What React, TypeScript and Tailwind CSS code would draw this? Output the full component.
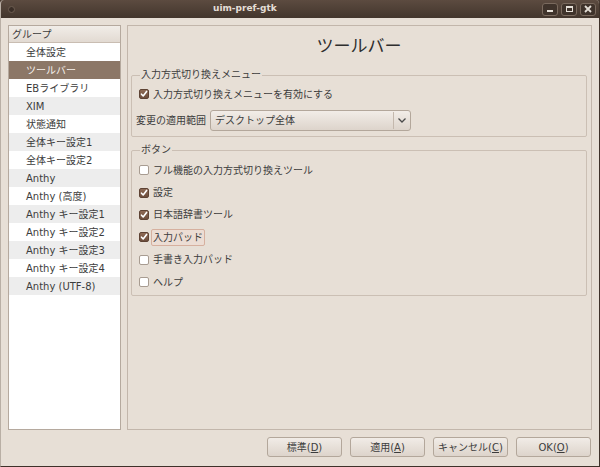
import React from "react";

const FONT = { fontFamily: '"DejaVu Sans", "Noto Sans CJK JP", sans-serif' };

const groups = [
  "全体設定",
  "ツールバー",
  "EBライブラリ",
  "XIM",
  "状態通知",
  "全体キー設定1",
  "全体キー設定2",
  "Anthy",
  "Anthy (高度)",
  "Anthy キー設定1",
  "Anthy キー設定2",
  "Anthy キー設定3",
  "Anthy キー設定4",
  "Anthy (UTF-8)",
];

function Check({ checked }: { checked: boolean }) {
  if (checked) {
    return (
      <span className="w-[10px] h-[10px] rounded-[2px] border border-[#5e4334] bg-gradient-to-b from-[#8e6a55] to-[#6d4e3d] flex items-center justify-center shrink-0">
        <svg width="8" height="8" viewBox="0 0 8 8">
          <path d="M1.5 4.2 L3.2 6 L6.6 1.4" stroke="#ffffff" strokeWidth="1.6" fill="none" strokeLinecap="round" strokeLinejoin="round" />
        </svg>
      </span>
    );
  }
  return <span className="w-[10px] h-[10px] rounded-[2px] border border-[#a89c91] bg-white shrink-0" />;
}

function CheckRow({ label, checked, focused, h = "h-[22.4px]" }: { label: string; checked: boolean; focused?: boolean; h?: string }) {
  return (
    <div className={`flex items-center ${h} pl-[7px] gap-[2px]`}>
      <Check checked={checked} />
      <span
        className={`px-[1px] leading-[15px] rounded-[2px] border ${
          focused ? "border-[#d6b09f] bg-[#ecddd4]" : "border-transparent"
        }`}
      >
        {label}
      </span>
    </div>
  );
}

function Btn({ text, mn }: { text: string; mn: string }) {
  return (
    <div className="w-[75px] h-[20px] rounded-[3px] border border-[#b3a79b] bg-gradient-to-b from-[#f1ece7] to-[#ddd4cb] flex items-center justify-center text-[10px] text-[#3c3c3c]">
      <span>
        {text}(<span className="underline">{mn}</span>)
      </span>
    </div>
  );
}

export default function App() {
  return (
    <div className="w-[600px] h-[467px] overflow-hidden bg-[#4a3a30]" style={FONT}>
      <div className="w-[600px] h-[467px] flex flex-col bg-[#e7dfd6] border-l border-l-[#b9afa5] border-r border-r-[#3e3129] border-b border-b-[#3e3129] rounded-t-[4px] overflow-hidden">
        {/* title bar */}
        <div className="h-[18px] shrink-0 flex items-center bg-gradient-to-b from-[#5c4b40] to-[#43362d] -ml-px">
          <span className="ml-[8px] w-[7px] h-[7px] rounded-full bg-[#3a2e27] border border-[#6d5d51]" />
          <span className="ml-[198px] text-[9px] font-bold text-[#e4ded6]" style={{ fontFamily: '"DejaVu Sans", sans-serif' }}>
            uim-pref-gtk
          </span>
          <div className="flex-1" />
          <div className="flex gap-[3px] mr-[3px]">
            <div className="w-[16px] h-[13px] rounded-[3px] border border-[#7a6a5e] bg-[#3f332b] flex items-end justify-center pb-[3px]">
              <span className="w-[6px] h-[2px] bg-[#e4ded6]" />
            </div>
            <div className="w-[16px] h-[13px] rounded-[3px] border border-[#7a6a5e] bg-[#3f332b] flex items-center justify-center">
              <span className="w-[7px] h-[6px] border border-[#e4ded6] border-t-2" />
            </div>
            <div className="w-[16px] h-[13px] rounded-[3px] border border-[#7a6a5e] bg-[#3f332b] flex items-center justify-center">
              <svg width="8" height="8" viewBox="0 0 8 8">
                <path d="M1 1 L7 7 M7 1 L1 7" stroke="#e4ded6" strokeWidth="1.8" />
              </svg>
            </div>
          </div>
        </div>

        {/* body */}
        <div className="flex-1 flex flex-col px-[7px] pt-[7px]">
          <div className="h-[405px] flex gap-[6px]">
            {/* left list */}
            <div className="w-[113px] shrink-0 border border-[#b5a99e] bg-white flex flex-col text-[10px] text-[#3c3c3c]">
              <div className="h-[17px] shrink-0 flex items-center pl-[3px] bg-gradient-to-b from-[#f1ede8] to-[#e2dad2] border-b border-[#c9bdb2]">
                グループ
              </div>
              {groups.map((g, i) => {
                const sel = i === 1;
                return (
                  <div
                    key={g}
                    className={`h-[18px] shrink-0 flex items-center pl-[17px] ${
                      sel ? "bg-[#8c7767] text-[#f6f1ec]" : i % 2 === 1 ? "bg-[#ededed]" : "bg-white"
                    }`}
                  >
                    {g}
                  </div>
                );
              })}
            </div>

            {/* right panel */}
            <div className="flex-1 border border-[#c2b6ab] flex flex-col pl-[3px] pr-[4px] text-[10px] text-[#3c3c3c]">
              <div className="h-[42px] flex items-center justify-center text-[17px] text-[#2e2e2e]">ツールバー</div>

              <fieldset className="border border-[#cbbfb4] rounded-[2px] px-0 pb-[5px]">
                <legend className="ml-[8px] px-[1px] leading-[14px]">入力方式切り換えメニュー</legend>
                <CheckRow label="入力方式切り換えメニューを有効にする" checked={true} h="h-[20px] mt-[2px]" />
                <div className="flex items-center mt-[6px] pl-[4px] gap-[4px]">
                  <span>変更の適用範囲</span>
                  <div className="w-[201px] h-[21px] rounded-[3px] border border-[#b3a79b] bg-gradient-to-b from-[#f2ede8] to-[#ddd4cb] flex items-center">
                    <span className="flex-1 pl-[4px]">デスクトップ全体</span>
                    <span className="w-px h-[17px] bg-[#c4b8ad]" />
                    <span className="w-[16px] flex items-center justify-center">
                      <svg width="8" height="5" viewBox="0 0 8 5">
                        <path d="M0.5 0.5 L4 4 L7.5 0.5" stroke="#4a4a4a" strokeWidth="1.3" fill="none" />
                      </svg>
                    </span>
                  </div>
                </div>
              </fieldset>

              <fieldset className="mt-[6px] border border-[#cbbfb4] rounded-[2px] px-0 pt-[2px] pb-[2px]">
                <legend className="ml-[8px] px-[1px] leading-[14px]">ボタン</legend>
                <CheckRow label="フル機能の入力方式切り換えツール" checked={false} />
                <CheckRow label="設定" checked={true} />
                <CheckRow label="日本語辞書ツール" checked={true} />
                <CheckRow label="入力パッド" checked={true} focused />
                <CheckRow label="手書き入力パッド" checked={false} />
                <CheckRow label="ヘルプ" checked={false} />
              </fieldset>
            </div>
          </div>

          {/* buttons */}
          <div className="mt-[7px] flex justify-end gap-[8px] pr-[1px]">
            <Btn text="標準" mn="D" />
            <Btn text="適用" mn="A" />
            <Btn text="キャンセル" mn="C" />
            <Btn text="OK" mn="O" />
          </div>
        </div>
      </div>
    </div>
  );
}
